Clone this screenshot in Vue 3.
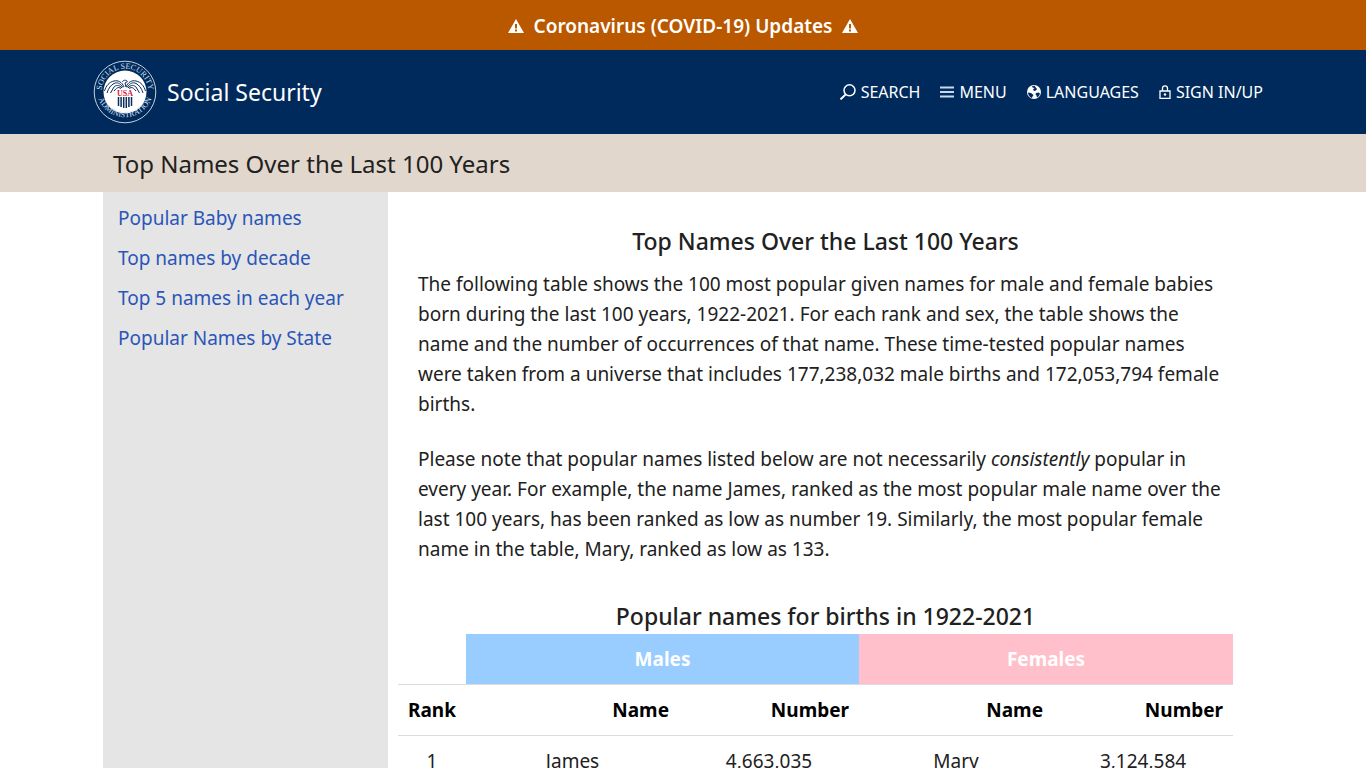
<template>
  <div class="page">
    <a class="alert" href="#">
      <svg class="warn" viewBox="0 0 16 14" aria-hidden="true">
        <path fill="#fff" fill-rule="evenodd" d="M8 0 16 14H0ZM7 5v4.500h2V5ZM7 10.500v2h2v-2Z" />
      </svg>
      <span>Coronavirus (COVID-19) Updates</span>
      <svg class="warn" viewBox="0 0 16 14" aria-hidden="true">
        <path fill="#fff" fill-rule="evenodd" d="M8 0 16 14H0ZM7 5v4.500h2V5ZM7 10.500v2h2v-2Z" />
      </svg>
    </a>

    <header class="banner">
      <div class="banner-inner">
        <a class="brand" href="#">
          <svg class="seal" viewBox="0 0 64 64" aria-hidden="true">
            <defs>
              <path id="arc-top" d="M9.500 39A23.500 23.500 0 1 1 54.500 39" />
              <path id="arc-bottom" d="M4 33A28.300 28.300 0 0 0 60 33" />
            </defs>
            <circle cx="32" cy="32" r="30.800" fill="none" stroke="#c3d0e0" stroke-width="1" />
            <circle cx="32" cy="32" r="21.500" fill="#fff" />
            <text class="seal-text">
              <textPath href="#arc-top" startOffset="50%" text-anchor="middle">SOCIAL SECURITY</textPath>
            </text>
            <text class="seal-text">
              <textPath href="#arc-bottom" startOffset="50%" text-anchor="middle">ADMINISTRATION</textPath>
            </text>
            <g fill="none" stroke="#0b2d5c" stroke-width="1">
              <path d="M31 27C29 22 25 20 21 21 16 22 13 26 11.500 31" />
              <path d="M30 27.500C27 23 24 22 21 23.500 18 25 15.500 28 14 33" />
              <path d="M29 28C26 24.500 23 25 21 27L17.500 33" />
              <path d="M28 28.500C25 26.500 23.500 28 21 31" />
              <path d="M33 27C35 22 39 20 43 21 48 22 51 26 52.500 31" />
              <path d="M34 27.500C37 23 40 22 43 23.500 46 25 48.500 28 50 33" />
              <path d="M35 28C38 24.500 41 25 43 27L46.500 33" />
              <path d="M36 28.500C39 26.500 40.500 28 43 31" />
              <path d="M29.500 22C30 20 33 19.500 34.500 21.500L32 23 33 27" />
            </g>
            <path d="M25.500 37v9M28.100 37v10M30.700 37v11M33.300 37v11M35.900 37v10M38.500 37v9" stroke="#0b2d5c" stroke-width="1.500" />
            <text class="seal-usa" x="32" y="35.500" text-anchor="middle">USA</text>
          </svg>
          <span>Social Security</span>
        </a>

        <nav class="tools">
          <a href="#">
            <svg class="ico-search" viewBox="0 0 16 16" aria-hidden="true">
              <g fill="none" stroke="#fff" stroke-width="1.500">
                <circle cx="9.500" cy="6.300" r="5.500" />
                <path d="M5.700 10.400.500 15.400" stroke-width="2" />
              </g>
            </svg>
            SEARCH
          </a>
          <a href="#">
            <svg class="ico" viewBox="0 0 14 14" aria-hidden="true">
              <path d="M0 2.500h14M0 7h14M0 11.500h14" stroke="#c8d9ee" stroke-width="1.800" />
            </svg>
            MENU
          </a>
          <a href="#">
            <svg class="ico" viewBox="0 0 14 14" aria-hidden="true">
              <circle cx="7" cy="7" r="7" fill="#fff" />
              <path fill="#002a5c" d="M7.500.800 5 1.200 5.500 2.500 7.500 3 6 4.500 7 6 9 5.500 10 4 8.800 2.500ZM1 7.500 4 8 6.500 10 5.500 11.500 5 13 3 12 1.500 10ZM9 8l2.500-.500 1.500 1-1 2.500-2 1.500-.500-2L8.500 9.500Z" />
            </svg>
            LANGUAGES
          </a>
          <a href="#">
            <svg class="ico-lock" viewBox="0 0 12 14" aria-hidden="true">
              <path d="M1 6h10v7.300H1ZM3.500 6V3.300a2.500 2.500 0 0 1 5 0V6" fill="none" stroke="#fff" stroke-width="1.300" />
              <circle cx="6" cy="9.500" r="1.200" fill="#fff" />
            </svg>
            SIGN IN/UP
          </a>
        </nav>
      </div>
    </header>

    <div class="title-bar">
      <h1>Top Names Over the Last 100 Years</h1>
    </div>

    <div class="content">
      <aside class="sidebar">
        <ul>
          <li v-for="link in links" :key="link"><a href="#">{{ link }}</a></li>
        </ul>
      </aside>

      <main class="main">
        <h2>Top Names Over the Last 100 Years</h2>
        <p>
          The following table shows the 100 most popular given names for male and female babies
          born during the last 100 years, 1922-2021. For each rank and sex, the table shows the
          name and the number of occurrences of that name. These time-tested popular names
          were taken from a universe that includes 177,238,032 male births and 172,053,794 female
          births.
        </p>
        <p>
          Please note that popular names listed below are not necessarily <em>consistently</em> popular in
          every year. For example, the name James, ranked as the most popular male name over the
          last 100 years, has been ranked as low as number 19. Similarly, the most popular female
          name in the table, Mary, ranked as low as 133.
        </p>

        <h2 id="names-title" class="table-title">Popular names for births in 1922-2021</h2>
        <table aria-labelledby="names-title">
          <colgroup>
            <col class="col-rank" />
            <col class="col-male-name" />
            <col class="col-number" />
            <col class="col-female-name" />
            <col class="col-number" />
          </colgroup>
          <thead>
            <tr class="groups">
              <td></td>
              <th class="males" colspan="2" scope="colgroup">Males</th>
              <th class="females" colspan="2" scope="colgroup">Females</th>
            </tr>
            <tr class="heads">
              <th scope="col">Rank</th>
              <th scope="col">Name</th>
              <th scope="col">Number</th>
              <th scope="col">Name</th>
              <th scope="col">Number</th>
            </tr>
          </thead>
          <tbody>
            <tr v-for="r in rows" :key="r.rank">
              <td>{{ r.rank }}</td>
              <td>{{ r.male }}</td>
              <td>{{ r.maleCount.toLocaleString('en-US') }}</td>
              <td>{{ r.female }}</td>
              <td>{{ r.femaleCount.toLocaleString('en-US') }}</td>
            </tr>
          </tbody>
        </table>
      </main>
    </div>
  </div>
</template>

<script setup>
const links = [
  'Popular Baby names',
  'Top names by decade',
  'Top 5 names in each year',
  'Popular Names by State'
];

const rows = [
  { rank: 1, male: 'James', maleCount: 4663035, female: 'Mary', femaleCount: 3124584 }
];
</script>

<style>
body {
  background: #fff;
}
</style>

<style scoped>
.page {
  font-family: "Segoe UI", "Noto Sans", "Open Sans", sans-serif;
  font-size: 19px;
  line-height: 30px;
  color: #212121;
}
a {
  text-decoration: none;
}
.alert {
  display: flex;
  align-items: center;
  justify-content: center;
  gap: 10px;
  padding: 11px 10px 9px;
  background: #ba5800;
  color: #fff;
  font-weight: 600;
}
.warn {
  width: 16px;
  height: 14px;
}
.banner {
  background: #002a5c;
}
.banner-inner,
.title-bar h1,
.content {
  width: 90%;
  max-width: 1160px;
  margin: 0 auto;
}
.banner-inner {
  display: flex;
  align-items: center;
  justify-content: space-between;
  padding: 10px 0;
}
.brand {
  display: flex;
  align-items: center;
  gap: 10px;
  margin-left: -10px;
  color: #fff;
  font-size: 23px;
}
.seal {
  width: 64px;
  height: 64px;
}
.seal-text {
  font-family: "Liberation Serif", serif;
  font-size: 8px;
  fill: #d5e0ee;
}
.seal-usa {
  font-family: "Liberation Serif", serif;
  font-size: 8px;
  font-weight: bold;
  fill: #d8203a;
}
.tools {
  display: flex;
  gap: 20px;
  font-size: 16px;
}
.tools a {
  display: flex;
  align-items: center;
  gap: 5px;
  color: #fff;
}
.ico-search {
  width: 16px;
  height: 16px;
}
.ico {
  width: 14px;
  height: 14px;
}
.ico-lock {
  width: 12px;
  height: 14px;
}
.title-bar {
  background: #e1d7cc;
}
.title-bar h1 {
  box-sizing: border-box;
  padding: 15px 10px 13px;
  font-size: 24px;
  font-weight: 400;
}
.content {
  display: flex;
}
.sidebar {
  flex: 0 0 285px;
  background: #e5e5e5;
}
.sidebar ul {
  margin: 0;
  padding: 6px 15px;
  list-style: none;
}
.sidebar li {
  padding: 5px 0;
}
.sidebar a {
  color: #2a55b9;
}
.main {
  flex: 1;
  min-width: 0;
  padding: 31px 30px 30px;
}
h2 {
  margin: 0 0 10px;
  font-size: 23px;
  line-height: 36px;
  font-weight: 500;
  text-align: center;
}
p {
  margin: 0 0 25px;
}
.main .table-title {
  margin: 34px 0 0;
}
table {
  width: calc(100% + 20px);
  margin-left: -20px;
  table-layout: fixed;
  border-collapse: separate;
  border-spacing: 0;
}
.col-rank {
  width: 68px;
}
.col-male-name {
  width: 213px;
}
.col-number {
  width: 180px;
}
.col-female-name {
  width: 194px;
}
th,
td {
  padding: 10px;
  border-bottom: 1px solid #dcdcdc;
  text-align: center;
}
.groups th {
  color: #fff;
}
.males {
  background: #99ccff;
}
.females {
  background: #ffc0cb;
}
.heads th {
  color: #000;
  text-align: right;
}
</style>
